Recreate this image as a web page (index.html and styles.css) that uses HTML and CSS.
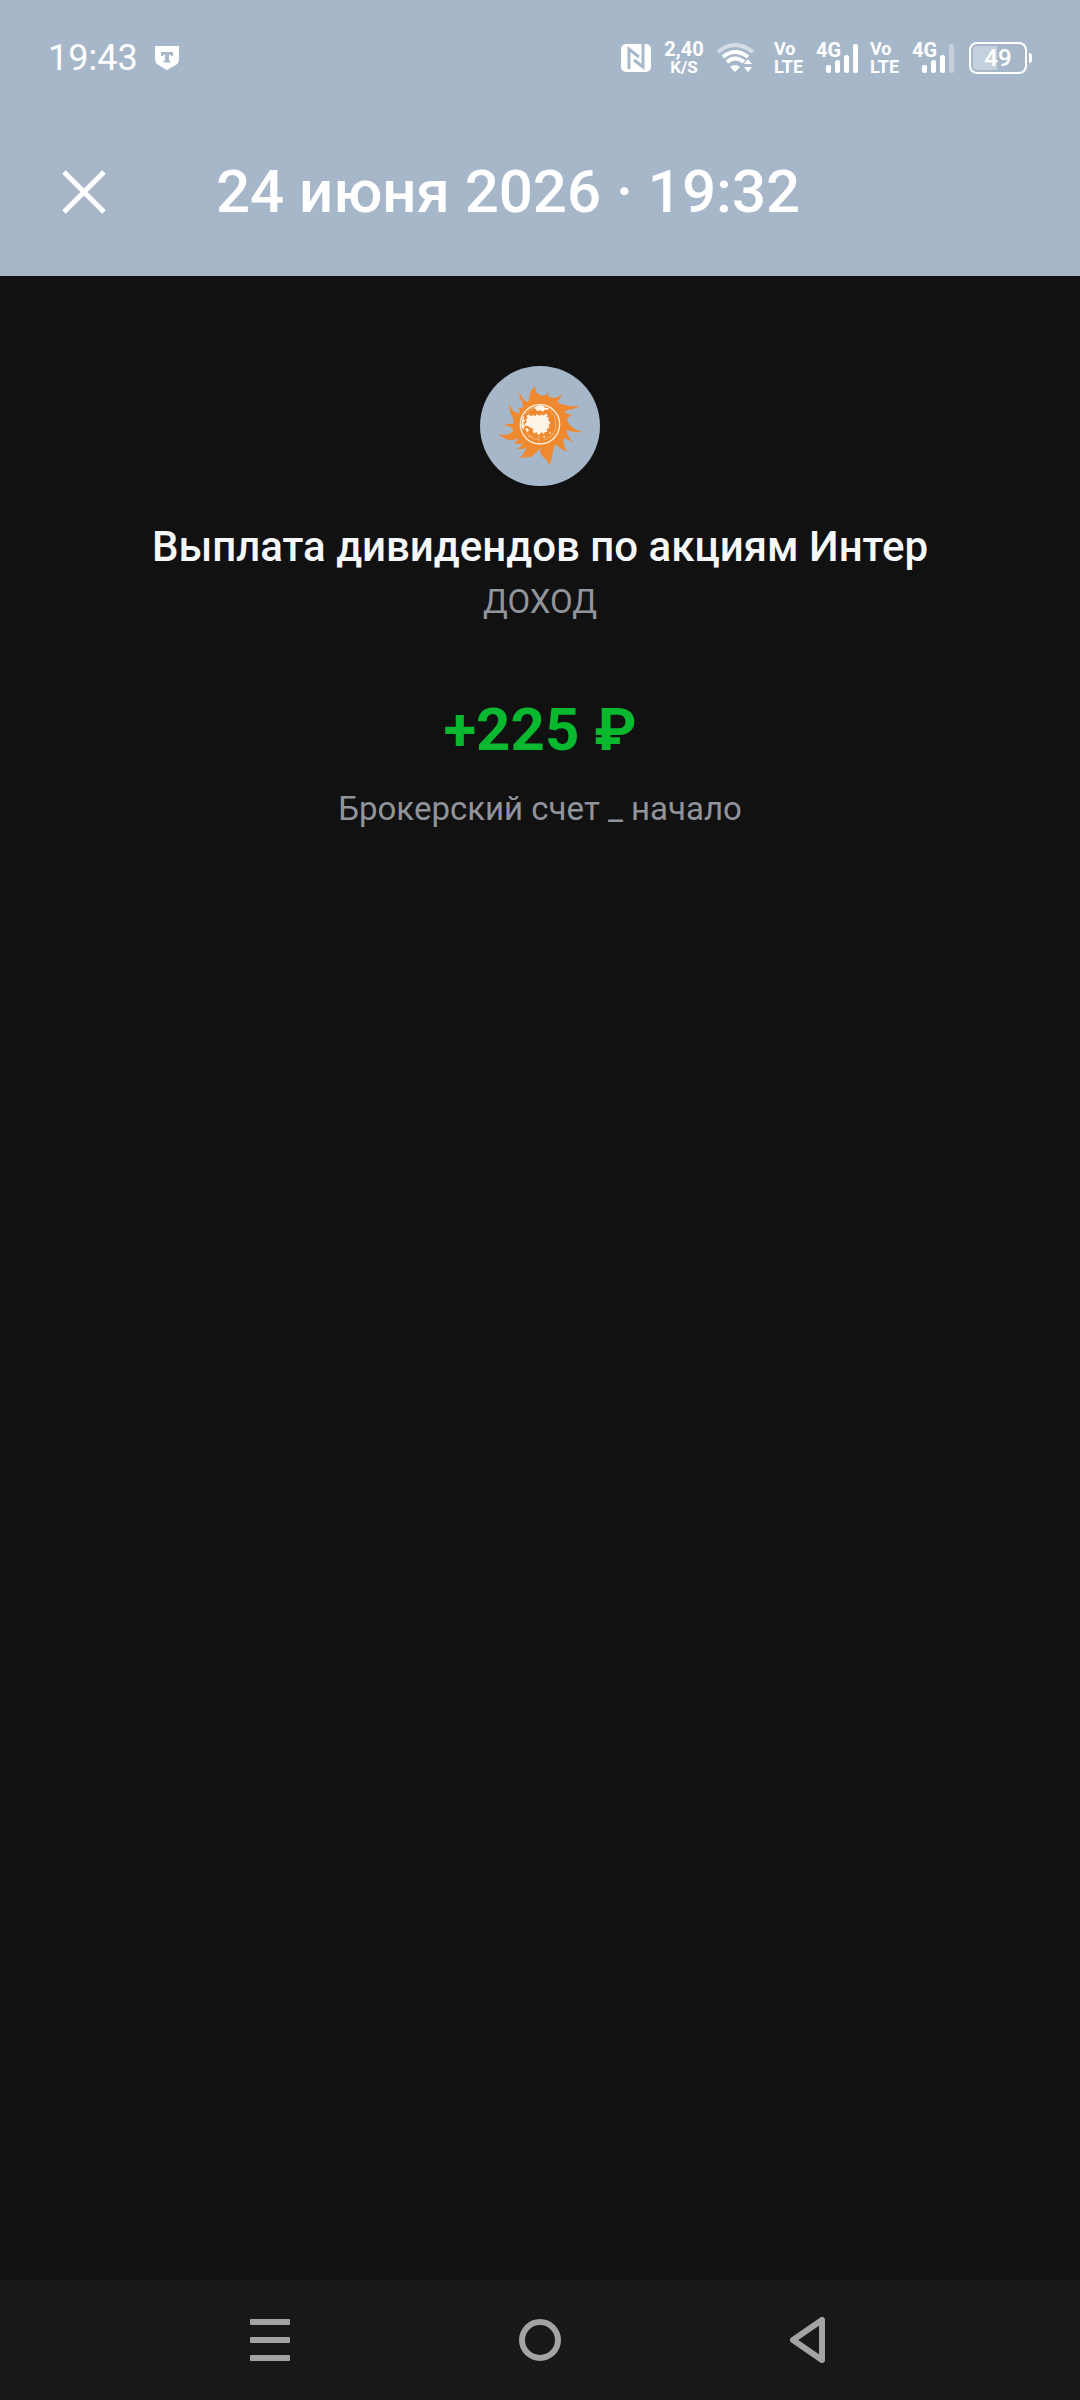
FILE: index.html
```html
<!DOCTYPE html>
<html lang="ru">
<head>
  <meta charset="UTF-8" />
  <meta name="viewport" content="width=device-width, initial-scale=1.0"/>
  <title>Операция</title>
  <link rel="stylesheet" href="styles.css">
</head>
<body>
  <header class="header">
    <div class="status-bar">
      <span class="time">19:43</span>
      <svg class="bank-icon" width="26" height="26" viewBox="0 0 26 26">
        <path fill="#fff" fill-rule="evenodd" d="M1 1H25V14Q25 19 20 21L13 25L6 21Q1 19 1 14ZM7 7V11H9Q9 9.500 11 9.500V15Q11 16 9.500 16V17.500H16.500V16Q15 16 15 15V9.500Q17 9.500 17 11H19V7Z"/>
      </svg>

      <div class="status-right">
        <svg class="nfc" width="30" height="28" viewBox="0 0 30 28">
          <rect width="30" height="28" rx="5" fill="#fff"/>
          <path fill="none" stroke="#a7b7ca" stroke-width="3" d="M8 25V5L18 13M22 0V23L13 16"/>
        </svg>
        <div class="speed"><span>2,40</span><small>K/S</small></div>
        <svg class="wifi" width="37" height="30" viewBox="0 0 37 30">
          <g fill="none" stroke="#fff" stroke-width="4">
            <path opacity=".5" d="M1 9Q18 -5 36 9"/>
            <path d="M6 14Q18 4 31 14"/>
            <path d="M10 19Q18 12 27 19"/>
          </g>
          <path fill="#fff" d="M13 24Q18 20 23 24L18 29ZM27 21L31 16L35 21ZM27 24H35L31 29Z"/>
        </svg>
        <div class="volte"><span>Vo</span><span>LTE</span></div>
        <div class="signal">
          <span>4G</span>
          <svg width="34" height="30" viewBox="0 0 34 30">
            <g fill="#fff">
              <rect x="0" y="22" width="5" height="8" rx="2"/>
              <rect x="9" y="17" width="5" height="13" rx="2"/>
              <rect x="18" y="12" width="5" height="18" rx="2"/>
              <rect x="27" y="1" width="5" height="29" rx="2"/>
            </g>
          </svg>
        </div>
        <div class="volte"><span>Vo</span><span>LTE</span></div>
        <div class="signal">
          <span>4G</span>
          <svg width="34" height="30" viewBox="0 0 34 30">
            <g fill="#fff">
              <rect x="0" y="22" width="5" height="8" rx="2"/>
              <rect x="9" y="17" width="5" height="13" rx="2"/>
              <rect x="18" y="12" width="5" height="18" rx="2"/>
              <rect x="27" y="1" width="5" height="29" rx="2" opacity=".35"/>
            </g>
          </svg>
        </div>
        <div class="battery"><span class="level">49</span></div>
      </div>
    </div>

    <div class="title-bar">
      <button class="close" aria-label="Закрыть">
        <svg width="44" height="44" viewBox="0 0 44 44">
          <path fill="none" stroke="#fff" stroke-width="5" d="M2 2L42 42M42 2L2 42"/>
        </svg>
      </button>
      <h1>24 июня 2026 · 19:32</h1>
    </div>
  </header>

  <main class="operation">
    <svg class="logo" width="120" height="120" viewBox="30 33 360 360">
      <circle cx="210" cy="213" r="180" fill="#a7b7ca"/>
      <path fill="#ee892f" d="M198 94C192 110 204 120 216 122C226 122 231 118 235 111C233 120 234 125 241 127C254 131 266 126 278 116C271 127 268 134 261 140C278 152 300 154 329 154C312 163 294 165 282 169C290 176 297 180 307 180C298 184 293 188 291 195C298 214 318 228 338 230C322 235 302 228 290 225C290 240 303 252 309 264C299 256 288 251 281 250C277 264 285 281 293 290C275 284 264 276 257 268C246 284 250 307 238 331C234 317 228 316 218 304C208 292 211 285 212 280C204 288 196 294 190 301C182 310 164 304 145 311C158 304 163 291 171 275C163 282 155 284 141 281C151 278 155 271 159 265C146 268 139 267 132 264C141 259 144 254 145 250C126 260 108 253 101 248C95 244 90 243 83 238C107 243 124 238 130 226C122 212 113 211 102 213C111 205 119 206 130 207C135 184 113 174 119 148C124 164 134 174 148 175C151 168 147 164 146 159C150 160 154 161 158 157C164 144 142 130 150 111C152 127 164 139 173 142C184 132 170 109 198 94Z"/>
      <circle cx="210" cy="208" r="59" fill="#ee892f" stroke="#fff0df" stroke-width="4"/>
      <g fill="#fff4e8">
        <path d="M190 158L207 151L220 152L226 158L236 159L234 165L224 164L220 170L211 166L202 169L198 163Z"/>
        <path d="M169 183L177 178L182 184L190 180L196 184L200 178L208 182L216 178L221 182L228 175L233 181L229 186L237 187L234 194L242 205L236 207L238 219L230 222L232 230L224 232L221 238L215 231L210 238L203 239L199 230L193 236L188 230L190 222L181 218L174 213L164 212L166 203L172 201L166 195L173 190Z"/>
        <path d="M158 187L163 183L161 193L165 197L160 203L164 216L160 225L154 213ZM166 222L173 219L177 227L171 232ZM217 246L224 242L226 248ZM237 235L243 229L241 238Z"/>
      </g>
      <g fill="none" stroke="#f9c38f" stroke-width="2">
        <path d="M166 180Q176 162 195 156M174 242Q196 256 207 252M207 240V263M240 164Q258 184 258 208Q257 231 243 245M166 232Q178 243 190 247M220 256Q240 250 251 235"/>
      </g>
    </svg>
    <h2>Выплата дивидендов по акциям Интер</h2>
    <p class="category">ДОХОД</p>
    <p class="amount">+225 ₽</p>
    <p class="account">Брокерский счет _ начало</p>
  </main>

  <nav class="nav-bar">
    <button aria-label="Недавние">
      <svg width="48" height="48" viewBox="0 0 48 48">
        <g fill="#a3a3a3">
          <rect x="4" y="3" width="40" height="6" rx="1"/>
          <rect x="4" y="21" width="40" height="6" rx="1"/>
          <rect x="4" y="39" width="40" height="6" rx="1"/>
        </g>
      </svg>
    </button>
    <button aria-label="Домой">
      <svg width="48" height="48" viewBox="0 0 48 48">
        <circle cx="24" cy="24" r="18" fill="none" stroke="#a3a3a3" stroke-width="6"/>
      </svg>
    </button>
    <button aria-label="Назад">
      <svg width="48" height="48" viewBox="0 0 48 48">
        <path fill="none" stroke="#a3a3a3" stroke-width="6" stroke-linejoin="round" d="M36 4V44L7 24Z"/>
      </svg>
    </button>
  </nav>
</body>
</html>
```

FILE: styles.css
```css
body {
  margin: 0;
  min-height: 100vh;
  background: #111111;
  color: #fff;
  font-family: Roboto, 'Liberation Sans', sans-serif;
  display: flex;
  flex-direction: column;
}
button {
  padding: 0;
  border: none;
  background: none;
  display: flex;
  align-items: center;
  justify-content: center;
  cursor: pointer;
}
svg { display: block; flex-shrink: 0; }
h1, h2, p { margin: 0; }

.header { background: #a7b7ca; }
.status-bar {
  height: 108px;
  padding: 8px 48px 0;
  box-sizing: border-box;
  display: flex;
  align-items: center;
}
.time { font-size: 36px; line-height: 42px; }
.bank-icon { margin-left: 16px; }
.status-right {
  margin-left: auto;
  display: flex;
  align-items: center;
}
.speed, .volte {
  display: flex;
  flex-direction: column;
  font-weight: bold;
  font-size: 18px;
  line-height: 18px;
}
.speed {
  width: 40px;
  margin: 0 13px;
  align-items: center;
  font-size: 20px;
}
.speed small { font-size: 17px; }
.volte { width: 30px; margin-left: 20px; }
.signal {
  position: relative;
  width: 44px;
  height: 30px;
  margin-left: 12px;
}
.signal svg { margin-left: 10px; }
.signal span {
  position: absolute;
  left: 0;
  top: -5px;
  font-size: 20px;
  font-weight: bold;
  line-height: 24px;
}
.signal + .volte { margin-left: 10px; }
.battery {
  position: relative;
  width: 58px;
  height: 32px;
  margin: 0 5px 0 13px;
  box-sizing: border-box;
  border: 2px solid #fff;
  border-radius: 8px;
  padding: 2px;
}
.battery::after {
  content: "";
  position: absolute;
  right: -7px;
  top: 9px;
  width: 3px;
  height: 10px;
  border-radius: 0 3px 3px 0;
  background: #fff;
}
.level {
  display: block;
  height: 24px;
  border-radius: 4px;
  background: linear-gradient(90deg, #c5d0de 49%, transparent 49%);
  text-align: center;
  font-size: 24px;
  font-weight: 500;
  line-height: 24px;
}

.title-bar {
  height: 168px;
  padding: 0 48px;
  display: flex;
  align-items: center;
}
.close { width: 72px; height: 72px; }
.title-bar h1 {
  margin-left: 96px;
  font-size: 60px;
  font-weight: 500;
  line-height: 70px;
}

.operation {
  flex: 1;
  padding: 90px 48px;
  display: flex;
  flex-direction: column;
  align-items: center;
  text-align: center;
}
.operation h2 {
  margin-top: 36px;
  color: #f6f7f8;
  font-size: 42px;
  font-weight: 500;
  line-height: 50px;
}
.category, .account {
  color: #92949b;
  font-size: 33px;
  line-height: 42px;
}
.category { margin-top: 9px; }
.amount {
  margin-top: 72px;
  color: #08b92f;
  font-size: 60px;
  font-weight: bold;
  line-height: 70px;
}
.account { margin-top: 23px; }

.nav-bar {
  height: 120px;
  background: #181818;
  display: flex;
  justify-content: center;
}
.nav-bar button { width: 25%; }
```
